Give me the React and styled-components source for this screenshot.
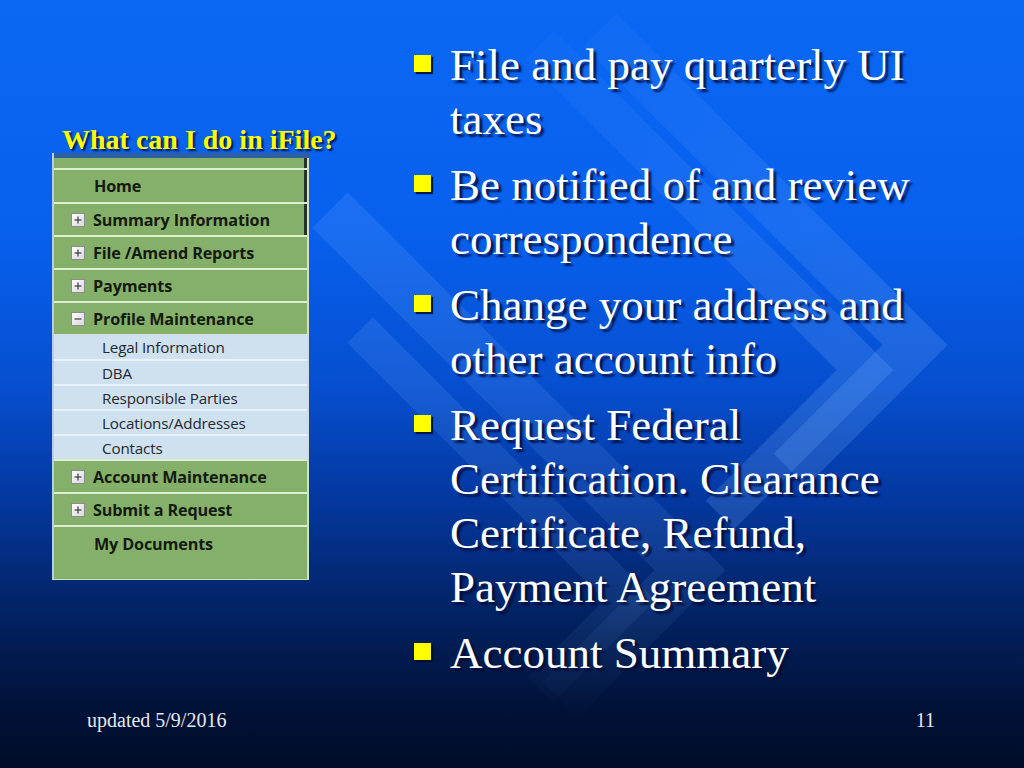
import React from "react";
import styled, { createGlobalStyle } from "styled-components";

const Global = createGlobalStyle`
  html, body { margin: 0; padding: 0; background: #000c28; }
  #root { width: 1024px; height: 768px; }
`;

const Slide = styled.div`
  position: relative;
  width: 1024px;
  height: 768px;
  overflow: hidden;
  background: linear-gradient(
    to bottom,
    #0a68f4 0%,
    #0860ee 30%,
    #064fd0 50%,
    #0438a0 65%,
    #022262 80%,
    #011238 92%,
    #000c28 100%
  );
  display: flex;
  flex-direction: column;
`;

const Backdrop = styled.svg`
  position: absolute;
  left: 0;
  top: 0;
  width: 1024px;
  height: 768px;
  pointer-events: none;
`;

const Main = styled.div`
  position: relative;
  display: flex;
  flex: 1;
  padding-top: 38px;
`;

const LeftCol = styled.div`
  width: 361px;
  padding-left: 52px;
  padding-top: 89px;
  box-sizing: border-box;
  display: flex;
  flex-direction: column;
  align-items: flex-start;
`;

const Title = styled.div`
  margin-left: 10px;
  font-family: "Liberation Serif", "Times New Roman", serif;
  font-weight: 700;
  font-size: 28px;
  line-height: 26px;
  color: #ffff00;
  text-shadow: 2px 2px 2px rgba(0, 10, 60, 0.9);
  white-space: nowrap;
`;

const Panel = styled.div`
  width: 257px;
  box-sizing: border-box;
  border-left: 2px solid #b9cfe9;
  border-right: 2px solid #cfe2c6;
  border-bottom: 1px solid #cfe2c6;
  background: #85b06a;
  display: flex;
  flex-direction: column;
`;

const TopBar = styled.div`
  height: 5px;
  background: #2e5f9f;
  margin-right: -2px;
`;

const TopGap = styled.div`
  height: 10px;
  background: #85b06a;
  box-shadow: inset -3px 0 0 #263626;
`;

const Row = styled.div`
  height: ${(p) => p.h}px;
  box-sizing: border-box;
  border-top: 2px solid #dcefd2;
  background: #85b06a;
  display: flex;
  align-items: ${(p) => (p.top ? "flex-start" : "center")};
  padding-top: ${(p) => (p.top ? "6px" : "0")};
  padding-left: ${(p) => (p.icon ? "17px" : "40px")};
  gap: 8px;
  box-shadow: ${(p) => (p.edge ? "inset -3px 0 0 #263626" : "none")};
  font-family: "Open Sans", "DejaVu Sans", sans-serif;
  font-weight: 700;
  font-size: 16.2px;
  color: #141a10;
  letter-spacing: -0.15px;
`;

const SubRow = styled.div`
  height: 25px;
  box-sizing: border-box;
  border-top: ${(p) => (p.first ? "0" : "2px solid #eaf2f9")};
  background: #cfe0ef;
  display: flex;
  align-items: center;
  padding-left: 48px;
  font-family: "Open Sans", "DejaVu Sans", sans-serif;
  font-weight: 400;
  font-size: 15.2px;
  color: #25282c;
  letter-spacing: -0.15px;
`;

const ToggleBox = styled.svg`
  width: 14px;
  height: 14px;
  flex: none;
`;

const Toggle = ({ minus }) => (
  <ToggleBox viewBox="0 0 14 14">
    <defs>
      <linearGradient id={minus ? "tgm" : "tgp"} x1="0" y1="0" x2="1" y2="1">
        <stop offset="0" stopColor="#ffffff" />
        <stop offset="1" stopColor="#d6d6d6" />
      </linearGradient>
    </defs>
    <rect x="0.5" y="0.5" width="13" height="13" fill={`url(#${minus ? "tgm" : "tgp"})`} stroke="#8c8c8c" />
    <line x1="3.5" y1="7" x2="10.5" y2="7" stroke="#3c3c3c" strokeWidth="1.2" />
    {!minus && <line x1="7" y1="3.5" x2="7" y2="10.5" stroke="#3c3c3c" strokeWidth="1.2" />}
  </ToggleBox>
);

const RightCol = styled.div`
  flex: 1;
  padding-left: 53px;
  display: flex;
  flex-direction: column;
  gap: 12px;
`;

const Item = styled.div`
  display: flex;
  align-items: flex-start;
`;

const Bullet = styled.span`
  flex: none;
  width: 17px;
  height: 17px;
  margin-top: 17px;
  margin-right: 19px;
  background: #ffff00;
  box-shadow: 2px 2px 1px rgba(0, 12, 50, 0.85);
`;

const ItemText = styled.div`
  font-family: "Liberation Serif", "Times New Roman", serif;
  font-size: 45px;
  line-height: 54px;
  color: #ffffff;
  text-shadow: 3px 3px 2px rgba(0, 12, 55, 0.85);
`;

const Footer = styled.div`
  position: relative;
  height: 60px;
  display: flex;
  justify-content: space-between;
  align-items: flex-start;
  padding: 0 89px 0 87px;
  font-family: "Liberation Serif", "Times New Roman", serif;
  font-size: 20px;
  line-height: 24px;
  color: #e4e8f2;
`;

const bullets = [
  ["File and pay quarterly UI", "taxes"],
  ["Be notified of and review", "correspondence"],
  ["Change your address and", "other account info"],
  ["Request Federal", "Certification. Clearance", "Certificate, Refund,", "Payment Agreement"],
  ["Account Summary"],
];

const subs = ["Legal Information", "DBA", "Responsible Parties", "Locations/Addresses", "Contacts"];

export default function App() {
  return (
    <>
      <Global />
      <Slide>
        <Backdrop viewBox="0 0 1024 768">
          <defs>
            <linearGradient id="armFade" gradientUnits="userSpaceOnUse" x1="380" y1="60" x2="760" y2="440">
              <stop offset="0" stopColor="#7ab4ff" stopOpacity="0" />
              <stop offset="0.55" stopColor="#7ab4ff" stopOpacity="0.12" />
              <stop offset="1" stopColor="#7ab4ff" stopOpacity="0.2" />
            </linearGradient>
            <linearGradient id="lowFade" gradientUnits="userSpaceOnUse" x1="0" y1="300" x2="0" y2="720">
              <stop offset="0" stopColor="#7ab4ff" stopOpacity="0.16" />
              <stop offset="0.7" stopColor="#7ab4ff" stopOpacity="0.1" />
              <stop offset="1" stopColor="#7ab4ff" stopOpacity="0" />
            </linearGradient>
          </defs>
          <g fill="none" strokeLinejoin="miter" strokeMiterlimit="10">
            <polyline points="600,30 915,345 790,470" stroke="url(#armFade)" strokeWidth="46" />
            <polyline points="540,45 865,370 720,515" stroke="url(#armFade)" strokeWidth="40" />
            <polyline points="330,210 690,570 560,700" stroke="url(#lowFade)" strokeWidth="50" />
            <polyline points="360,330 630,600 540,690" stroke="url(#lowFade)" strokeWidth="36" />
          </g>
        </Backdrop>
        <Main>
          <LeftCol>
            <Title>What can I do in iFile?</Title>
            <Panel>
              <TopBar />
              <TopGap />
              <Row h={34} edge>Home</Row>
              <Row h={33} icon edge><Toggle />Summary Information</Row>
              <Row h={33} icon><Toggle />File /Amend Reports</Row>
              <Row h={33} icon><Toggle />Payments</Row>
              <Row h={33} icon><Toggle minus />Profile Maintenance</Row>
              {subs.map((s, i) => (
                <SubRow key={s} first={i === 0}>{s}</SubRow>
              ))}
              <Row h={33} icon><Toggle />Account Maintenance</Row>
              <Row h={33} icon><Toggle />Submit a Request</Row>
              <Row h={54} top>My Documents</Row>
            </Panel>
          </LeftCol>
          <RightCol>
            {bullets.map((lines, i) => (
              <Item key={i}>
                <Bullet />
                <ItemText>
                  {lines.map((l) => (
                    <div key={l}>{l}</div>
                  ))}
                </ItemText>
              </Item>
            ))}
          </RightCol>
        </Main>
        <Footer>
          <span>updated 5/9/2016</span>
          <span>11</span>
        </Footer>
      </Slide>
    </>
  );
}
